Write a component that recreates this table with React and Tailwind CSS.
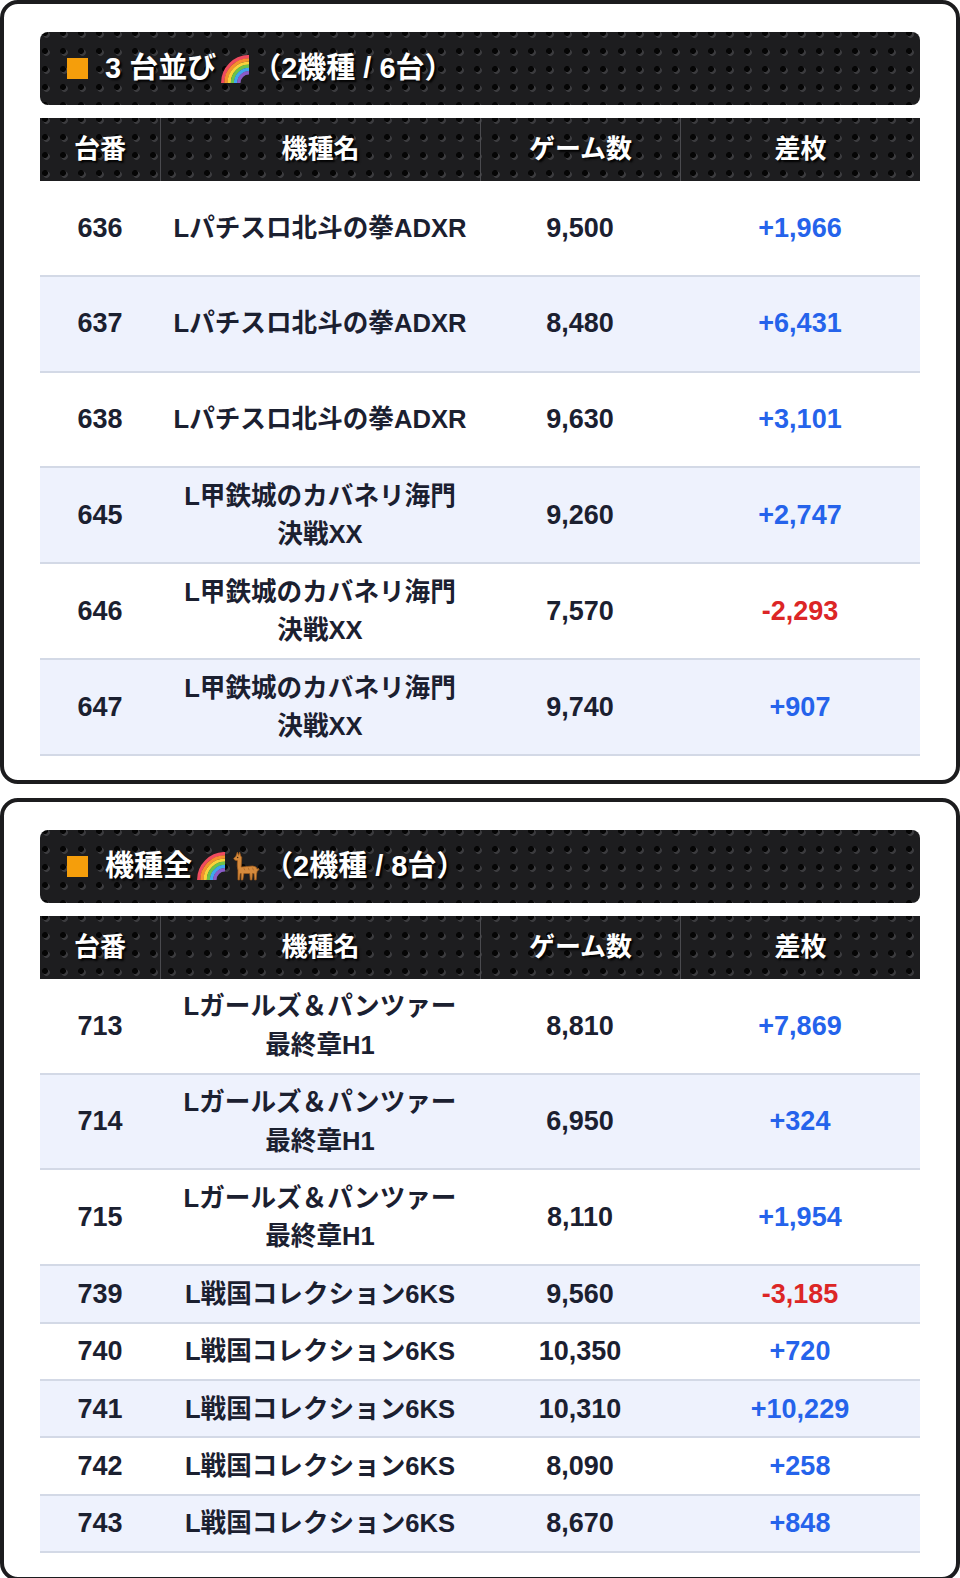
import React from "react";

const metal =
  "bg-[#1d1d1f] bg-[radial-gradient(circle_at_9px_9px,#050505_2.6px,transparent_3.3px),radial-gradient(circle_at_10.5px_10.5px,#3b3b3e_3px,transparent_3.7px)] bg-size-[18px_18px] bg-position-[-4px_-8px]";

const sections = [
  {
    title: "3 台並び",
    icons: ["rainbow"],
    count: "（2機種 / 6台）",
    tall: true,
    rows: [
      { no: "636", name: ["Lパチスロ北斗の拳ADXR"], games: "9,500", diff: "+1,966" },
      { no: "637", name: ["Lパチスロ北斗の拳ADXR"], games: "8,480", diff: "+6,431" },
      { no: "638", name: ["Lパチスロ北斗の拳ADXR"], games: "9,630", diff: "+3,101" },
      { no: "645", name: ["L甲鉄城のカバネリ海門", "決戦XX"], games: "9,260", diff: "+2,747" },
      { no: "646", name: ["L甲鉄城のカバネリ海門", "決戦XX"], games: "7,570", diff: "-2,293" },
      { no: "647", name: ["L甲鉄城のカバネリ海門", "決戦XX"], games: "9,740", diff: "+907" },
    ],
  },
  {
    title: "機種全",
    icons: ["rainbow", "llama"],
    count: "（2機種 / 8台）",
    tall: false,
    rows: [
      { no: "713", name: ["Lガールズ＆パンツァー", "最終章H1"], games: "8,810", diff: "+7,869" },
      { no: "714", name: ["Lガールズ＆パンツァー", "最終章H1"], games: "6,950", diff: "+324" },
      { no: "715", name: ["Lガールズ＆パンツァー", "最終章H1"], games: "8,110", diff: "+1,954" },
      { no: "739", name: ["L戦国コレクション6KS"], games: "9,560", diff: "-3,185" },
      { no: "740", name: ["L戦国コレクション6KS"], games: "10,350", diff: "+720" },
      { no: "741", name: ["L戦国コレクション6KS"], games: "10,310", diff: "+10,229" },
      { no: "742", name: ["L戦国コレクション6KS"], games: "8,090", diff: "+258" },
      { no: "743", name: ["L戦国コレクション6KS"], games: "8,670", diff: "+848" },
    ],
  },
];

function Rainbow() {
  const bands = ["#ef4b5f", "#f7902f", "#fbd23a", "#6cc24a", "#3fa7f0", "#8a5cc8"];
  return (
    <svg width="30" height="28" viewBox="0 0 28 26" className="mx-[3px]">
      {bands.map((c, i) => {
        const r = 24.5 - i * 3;
        return (
          <path
            key={c}
            d={`M ${28 - r} 26 A ${r} ${r} 0 0 1 28 ${26 - r}`}
            fill="none"
            stroke={c}
            strokeWidth="3.2"
          />
        );
      })}
    </svg>
  );
}

function Llama() {
  return (
    <svg width="30" height="30" viewBox="0 0 28 28" className="mx-[3px]">
      <g fill="#d68a3c" stroke="#9c5a1c" strokeWidth="0.7" strokeLinejoin="round">
        <path d="M6 1 L7 4 L8 1 L9 4.5 L10 6 L9.5 15 L20 14 Q24 14 24.5 17 L25.5 16 L26 17.5 L24.5 19 L24 21 L23.5 27 L22 27 L21.5 21 L20 21 L19.5 27 L18 27 L17.5 21 L12 21 L11 27 L9.5 27 L9.5 21 L8.5 21 L8 27 L6.5 27 L6.5 18 Q5.5 15 6 9 L3.5 8.5 L2.5 7 L4.5 5 Z" />
      </g>
      <circle cx="6.2" cy="6" r="0.7" fill="#3a2410" />
      <path d="M12 16 L13 18 M16 15.5 L17 18 M20 15.5 L21 18" stroke="#b06a28" strokeWidth="0.8" />
    </svg>
  );
}

function Row({ row, index, tall }) {
  const plus = row.diff.startsWith("+");
  return (
    <div
      className={`grid grid-cols-[120px_320px_200px_240px] items-center border-b-2 border-[#d3d9e6] py-[8.5px] text-center font-bold text-[#1b2030] ${
        index % 2 === 1 ? "bg-[#eef2fd]" : "bg-white"
      } ${tall ? "min-h-[95.8px]" : ""}`}
    >
      <div className="text-[27px] leading-[38.4px]">{row.no}</div>
      <div className="text-[25.6px] leading-[38.4px]">
        {row.name.map((line) => (
          <div key={line} className="whitespace-nowrap">
            {line}
          </div>
        ))}
      </div>
      <div className="text-[27px] leading-[38.4px]">{row.games}</div>
      <div className={`text-[27px] leading-[38.4px] ${plus ? "text-[#2563eb]" : "text-[#dc2626]"}`}>
        {row.diff}
      </div>
    </div>
  );
}

function Section({ data }) {
  return (
    <section className="rounded-[18px] border-4 border-[#1c1c1e] bg-white px-9 pt-7 pb-6">
      <div
        className={`flex h-[73px] items-center rounded-lg pl-[27px] text-[29px] font-bold text-white [text-shadow:2px_2px_2px_rgba(0,0,0,0.95)] ${metal}`}
      >
        <span className="mr-[17px] h-[21px] w-[21px] bg-[#f59e0b]" />
        <span>{data.title}</span>
        {data.icons.map((ic, i) =>
          ic === "rainbow" ? <Rainbow key={i} /> : <Llama key={i} />
        )}
        <span>{data.count}</span>
      </div>

      <div className="mt-[13px]">
        <div
          className={`grid h-[63px] grid-cols-[120px_320px_200px_240px] text-[26px] font-bold text-white [text-shadow:2px_2px_2px_rgba(0,0,0,0.95)] ${metal}`}
        >
          <div className="flex items-center justify-center">台番</div>
          <div className="flex items-center justify-center border-l border-[#4a4a4e]">機種名</div>
          <div className="flex items-center justify-center border-l border-[#4a4a4e]">ゲーム数</div>
          <div className="flex items-center justify-center border-l border-[#4a4a4e]">差枚</div>
        </div>
        {data.rows.map((row, i) => (
          <Row key={row.no} row={row} index={i} tall={data.tall} />
        ))}
      </div>
    </section>
  );
}

export default function App() {
  return (
    <div className="flex w-[960px] flex-col gap-[14px] bg-white font-['Liberation_Sans','Noto_Sans_CJK_JP',sans-serif]">
      {sections.map((s) => (
        <Section key={s.title} data={s} />
      ))}
    </div>
  );
}
